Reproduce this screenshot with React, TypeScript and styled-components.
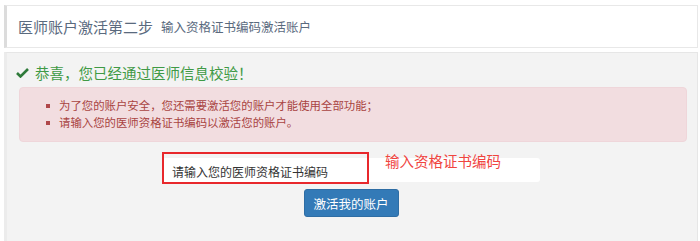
import * as React from 'react';
import styled, {createGlobalStyle} from 'styled-components';

const Global = createGlobalStyle`
    html, body {
        margin: 0;
        padding: 0;
        background: #fff;
        font-family: "Noto Sans CJK SC", "Noto Sans", sans-serif;
    }
`;

const Page = styled.div`
    width: 700px;
    height: 241px;
    padding: 5px 2px 0 4px;
    box-sizing: border-box;
    display: flex;
    flex-direction: column;
    gap: 4px;
    overflow: hidden;
`;

const Header = styled.header`
    height: 43px;
    box-sizing: border-box;
    background: #fff;
    border: 1px solid #e8e8e8;
    border-left: 3px solid #dcdcdc;
    display: flex;
    align-items: center;
    padding-left: 11px;
    gap: 8px;
`;

const Title = styled.h1`
    margin: 0;
    font-size: 15px;
    font-weight: 400;
    color: #5a6a7e;
`;

const Sub = styled.small`
    font-size: 12.5px;
    color: #5a6a7e;
`;

const Body = styled.section`
    flex-grow: 1;
    background: #f3f3f3;
    border: 1px solid #e6e6e6;
    border-bottom: none;
    border-left: 3px solid #ececec;
    padding: 8px 10px 0 8px;
    display: flex;
    flex-direction: column;
    align-items: center;
`;

const Success = styled.div`
    align-self: stretch;
    display: flex;
    align-items: center;
    gap: 6px;
    height: 22px;
    padding-left: 1px;
    font-size: 14.5px;
    color: #3f9a45;
`;

const Alert = styled.ul`
    align-self: stretch;
    margin: 4px 0 0 4px;
    padding: 8px 0 9px 26px;
    height: 55px;
    box-sizing: border-box;
    list-style: none;
    background: #f2dde0;
    border: 1px solid #efd6da;
    border-radius: 4px;
    color: #a94442;
    font-size: 11.4px;
    display: flex;
    flex-direction: column;
    justify-content: center;
`;

const Item = styled.li`
    display: flex;
    align-items: center;
    gap: 9px;
    line-height: 17px;
    &::before {
        content: '';
        width: 4px;
        height: 4px;
        background: #b0474a;
    }
`;

const Field = styled.div`
    position: relative;
    margin-top: 16px;
    width: 378px;
    height: 24px;
    background: #fff;
    border-radius: 3px;
`;

const Input = styled.input`
    width: 100%;
    height: 100%;
    box-sizing: border-box;
    border: none;
    background: transparent;
    padding: 0 0 0 10px;
    font-family: inherit;
    font-size: 12px;
    color: #333;
    outline: none;
    &::placeholder { color: #333; }
`;

const Mark = styled.div`
    position: absolute;
    left: 0;
    top: -6px;
    width: 207px;
    height: 32px;
    box-sizing: border-box;
    border: 2px solid #e8282c;
    pointer-events: none;
`;

const Note = styled.span`
    position: absolute;
    left: 223px;
    top: -8px;
    font-size: 14.5px;
    color: #f0453f;
    white-space: nowrap;
`;

const Button = styled.button`
    margin-top: 7px;
    width: 95px;
    height: 28px;
    border: 1px solid #2e6da4;
    border-radius: 3px;
    background: #337ab7;
    color: #fff;
    font-family: inherit;
    font-size: 12.5px;
    cursor: pointer;
`;

const Check = () => (
    <svg width="13" height="11" viewBox="0 0 13 11">
        <path d="M1 6 L4.5 9.5 L12 2" fill="none" stroke="#2f7a3a" strokeWidth="2.6" />
    </svg>
);

export default function App() {
    return (
        <Page>
            <Global />
            <Header>
                <Title>医师账户激活第二步</Title>
                <Sub>输入资格证书编码激活账户</Sub>
            </Header>
            <Body>
                <Success><Check />恭喜，您已经通过医师信息校验！</Success>
                <Alert>
                    <Item>为了您的账户安全，您还需要激活您的账户才能使用全部功能；</Item>
                    <Item>请输入您的医师资格证书编码以激活您的账户。</Item>
                </Alert>
                <Field>
                    <Input placeholder="请输入您的医师资格证书编码" />
                    <Mark />
                    <Note>输入资格证书编码</Note>
                </Field>
                <Button>激活我的账户</Button>
            </Body>
        </Page>
    );
}
